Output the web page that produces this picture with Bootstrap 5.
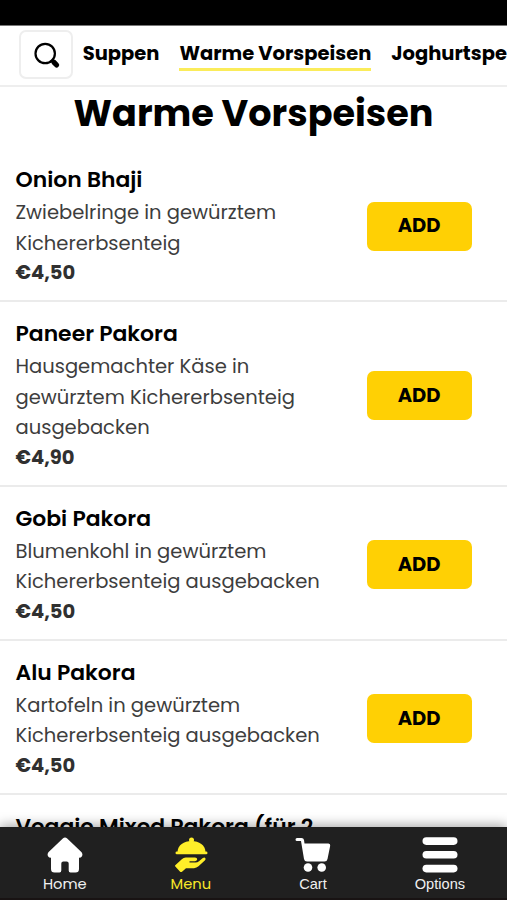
<!DOCTYPE html>
<html lang="de">
<head>
<meta charset="utf-8">
<meta name="viewport" content="width=device-width, initial-scale=1">
<title>Warme Vorspeisen</title>
<link href="https://cdn.jsdelivr.net/npm/bootstrap@5.3.0/dist/css/bootstrap.min.css" rel="stylesheet">
<style>
body { font-family: Poppins, Inter, "Liberation Sans", sans-serif; color: #000; }
.screen { height: 900px; }
.status-bar { height: 25px; border-bottom: 1px solid #777; box-sizing: content-box; }
.top-nav { height: 60.5px; padding-left: 19px; border-bottom: 2px solid #eee; }
.search-btn { width: 54px; height: 49px; margin-top: -1px; border: 2px solid #eee; border-radius: 7px; }
.search-btn svg { margin-left: 2px; }
.cat { font-size: 19.5px; font-weight: 700; line-height: 28px; color: #000; padding: 1px 0 0; border-bottom: 3px solid transparent; border-radius: 0; }
.cat.active { border-color: #fbec5a; color: #000; }
.cats { gap: 20px; margin-left: 9.7px; }
.page-title { font-size: 36.6px; font-weight: 700; line-height: 54px; padding-bottom: 7.7px; }
.dish { padding: 15px 35.5px 11.3px 15.5px; border-bottom: 2px solid #ebebeb; }
.dish-name { font-size: 21.9px; font-weight: 600; line-height: 33px; margin-bottom: 1.2px; }
.dish-text { font-size: 19.55px; line-height: 30.5px; color: #3d3d3d; }
.price { font-size: 19.5px; font-weight: 700; line-height: 30.5px; color: #303030; }
.add-btn { width: 105px; height: 49px; border-radius: 7px; background: #ffd004; font-size: 19.5px; font-weight: 700; color: #000; }
.tab-bar { height: 73px; padding-left: 1px; background: #202020; box-shadow: 0 -2px 11px rgba(0,0,0,.35); border-bottom: 2px solid #181313; }
.tab { color: #f0f0f0; padding-top: 10px; font-size: 14.7px; line-height: 20px; }
.tab svg { margin-bottom: 1px; }
.tab.current { color: #f8e829; }
.tab-btn { font-family: "Liberation Sans", Arial, sans-serif; font-size: 14.6px; }
</style>
<script src="https://cdn.jsdelivr.net/npm/bootstrap@5.3.0/dist/js/bootstrap.bundle.min.js"></script>
</head>
<body class="bg-white overflow-hidden">
<div class="screen d-flex flex-column overflow-hidden">
  <div class="status-bar bg-black flex-shrink-0"></div>
  <header class="top-nav d-flex align-items-center flex-shrink-0 overflow-hidden">
    <button class="search-btn btn p-0 bg-white d-flex align-items-center justify-content-center flex-shrink-0" aria-label="Suche">
      <svg width="28" height="28" viewBox="0 0 28 28" fill="none" stroke="#000" stroke-linecap="round"><circle cx="12.2" cy="12.5" r="9.7" stroke-width="2.2"/><path d="M18.5 18.8l2.5 2.5" stroke-width="3" stroke-linecap="butt"/><path d="M20.8 21.2l2.8 2.8" stroke-width="5.2"/></svg>
    </button>
    <nav class="cats nav flex-nowrap text-nowrap">
      <a class="cat nav-link" href="#">Suppen</a>
      <a class="cat nav-link active" href="#">Warme Vorspeisen</a>
      <a class="cat nav-link" href="#">Joghurtspeisen</a>
    </nav>
  </header>
  <main class="flex-fill overflow-hidden h-100">
    <h1 class="page-title text-center mb-0">Warme Vorspeisen</h1>
    <section>
      <article class="dish d-flex align-items-center justify-content-between">
        <div class="text-nowrap">
          <h2 class="dish-name">Onion Bhaji</h2>
          <div class="dish-text">Zwiebelringe in gewürztem<br>Kichererbsenteig</div>
          <div class="price">€4,50</div>
        </div>
        <button class="add-btn btn p-0 border-0">ADD</button>
      </article>
      <article class="dish d-flex align-items-center justify-content-between">
        <div class="text-nowrap">
          <h2 class="dish-name">Paneer Pakora</h2>
          <div class="dish-text">Hausgemachter Käse in<br>gewürztem Kichererbsenteig<br>ausgebacken</div>
          <div class="price">€4,90</div>
        </div>
        <button class="add-btn btn p-0 border-0">ADD</button>
      </article>
      <article class="dish d-flex align-items-center justify-content-between">
        <div class="text-nowrap">
          <h2 class="dish-name">Gobi Pakora</h2>
          <div class="dish-text">Blumenkohl in gewürztem<br>Kichererbsenteig ausgebacken</div>
          <div class="price">€4,50</div>
        </div>
        <button class="add-btn btn p-0 border-0">ADD</button>
      </article>
      <article class="dish d-flex align-items-center justify-content-between">
        <div class="text-nowrap">
          <h2 class="dish-name">Alu Pakora</h2>
          <div class="dish-text">Kartofeln in gewürztem<br>Kichererbsenteig ausgebacken</div>
          <div class="price">€4,50</div>
        </div>
        <button class="add-btn btn p-0 border-0">ADD</button>
      </article>
      <article class="dish">
        <h2 class="dish-name text-nowrap">Veggie Mixed Pakora (für 2</h2>
      </article>
    </section>
  </main>
  <footer class="tab-bar d-flex justify-content-around flex-shrink-0 position-relative">
    <a href="#" class="tab text-decoration-none d-flex flex-column align-items-center">
      <svg width="36" height="36" viewBox="0 0 36 36" fill="#fff"><path d="M15.8 1.4Q18-.4 20.2 1.4L34.6 15.3Q36 17.2 35 19.3Q34 20.8 32 20.8V32Q32 35.5 28.5 35.5H23.5Q21.7 35.5 21.7 33.5V26.5Q21.7 24.5 19.7 24.5H16.3Q14.3 24.5 14.3 26.5V33.5Q14.3 35.5 12.5 35.5H7.5Q4 35.5 4 32V20.8Q2 20.8 1 19.3Q0 17.2 1.4 15.3Z"/></svg>
      Home
    </a>
    <a href="#" class="tab current text-decoration-none d-flex flex-column align-items-center">
      <svg width="36" height="36" viewBox="0 0 36 36" fill="#ffee29"><circle cx="18.5" cy="3" r="2.5"/><path d="M4.5 15.5C4.5 8 11 4 18.5 4S32.500 8 32.500 15.500Z"/><rect x="2.500" y="14.500" width="32" height="2.800" rx="1.400"/><path d="M2.500 28L8.800 22.300Q10.500 20.600 12.800 20.600H22Q24.200 20.600 24.200 22.300T22 24.200H16.500V25.500H22.500Q24.500 25.500 26 24.300L29.500 21.300Q31.500 20 32.300 21Q33.200 22.200 31.800 23.600L25.500 29.300Q23.500 31 21 31.200H13L9 34.700Q7.900 35.600 6.900 34.500L2.300 29.600Q1.500 28.800 2.500 28Z"/></svg>
      Menu
    </a>
    <a href="#" class="tab tab-btn text-decoration-none d-flex flex-column align-items-center">
      <svg width="36" height="36" viewBox="0 0 36 36" fill="#fff"><path d="M2 1H6.5Q8.6 1 9 3L9.5 6.5H33.5Q35.5 6.7 35.2 8.8L32.5 22Q32 24.5 29.5 24.5H12Q9.5 24.5 9 22L6 4H2Q.5 4 .5 2.5T2 1Z"/><circle cx="13" cy="30.5" r="4.3"/><circle cx="26.7" cy="30.5" r="4.3"/></svg>
      Cart
    </a>
    <a href="#" class="tab tab-btn text-decoration-none d-flex flex-column align-items-center">
      <svg width="36" height="36" viewBox="0 0 36 36" fill="#fff"><rect x=".5" y=".3" width="35" height="7.6" rx="3.8"/><rect x=".5" y="14" width="35" height="7.6" rx="3.8"/><rect x=".5" y="27.8" width="35" height="7.6" rx="3.8"/></svg>
      Options
    </a>
  </footer>
</div>
</body>
</html>
